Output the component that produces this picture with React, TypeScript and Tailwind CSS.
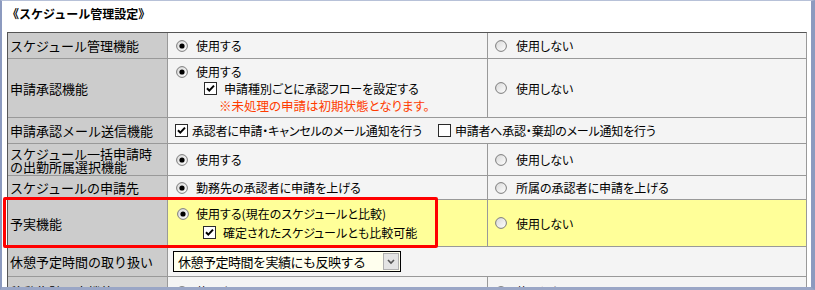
import React from "react";

const Radio = ({ checked }: { checked?: boolean }) => (
  <svg width="12" height="12" viewBox="0 0 12 12" className="shrink-0">
    <defs>
      <linearGradient id="rg" x1="0" y1="0" x2="1" y2="1">
        <stop offset="0" stopColor="#d8d8d8" />
        <stop offset="1" stopColor="#ffffff" />
      </linearGradient>
    </defs>
    <circle cx="6" cy="6" r="5.4" fill="url(#rg)" stroke="#7c7c7c" strokeWidth="1" />
    {checked && <circle cx="6" cy="6" r="2.6" fill="#000" />}
  </svg>
);

const Check = ({ checked }: { checked?: boolean }) => (
  <svg width="13" height="13" viewBox="0 0 13 13" className="shrink-0">
    <rect x="0.5" y="0.5" width="12" height="12" fill="#fff" stroke="#2a2a2a" />
    {checked && (
      <path d="M3 6.2 L5.3 8.6 L10 3.6" fill="none" stroke="#000" strokeWidth="2" />
    )}
  </svg>
);

const val = "text-[12px] leading-[17px] [font-feature-settings:'palt']";
const labelCls =
  "w-[160px] shrink-0 bg-[#cccccc] border-r border-[#999999] pl-[2px] flex items-center text-[13px] leading-[13px]";
const midCls = "w-[320px] shrink-0 border-r border-[#999999] flex items-center pl-[8px]";
const rightCls = "flex-1 flex items-center pl-[7px]";

export default function App() {
  return (
    <div className="relative w-[815px] h-[290px] overflow-hidden bg-white border-l-2 border-t border-r-4 border-b-[3px] border-l-[#8c9abf] border-t-[#b7c1d8] border-r-[#8c9abf] border-b-[#9aa6c6] font-['Noto_Sans_CJK_JP',sans-serif] text-black">
      <div className="h-[31px] pl-[5px] pt-[5px] text-[12px] leading-[16px] font-bold">
        《スケジュール管理設定》
      </div>
      <div className="ml-[5px] w-[800px] border-t border-l border-r border-t-[#555555] border-l-[#555555] border-r-[#999999] bg-[#f4f4f4]">
        {/* Row 1 */}
        <div className="flex h-[26px] border-b border-[#999999]">
          <div className={labelCls}>スケジュール管理機能</div>
          <div className={midCls}>
            <div className={`flex items-center gap-[8px] ${val}`}>
              <Radio checked />
              <span>使用する</span>
            </div>
          </div>
          <div className={rightCls}>
            <div className={`flex items-center gap-[9px] ${val}`}>
              <Radio />
              <span>使用しない</span>
            </div>
          </div>
        </div>
        {/* Row 2 */}
        <div className="flex h-[59px] border-b border-[#999999]">
          <div className={labelCls}>申請承認機能</div>
          <div className="w-[320px] shrink-0 border-r border-[#999999] pl-[8px] pt-[4px]">
            <div className={`flex items-center gap-[8px] ${val}`}>
              <Radio checked />
              <span>使用する</span>
            </div>
            <div className={`flex items-center gap-[7px] pl-[28px] ${val}`}>
              <Check checked />
              <span>申請種別ごとに承認フローを設定する</span>
            </div>
            <div className="pl-[43px] text-[12.5px] leading-[17px] text-[#ff3c00] [font-feature-settings:'palt']">
              ※未処理の申請は初期状態となります。
            </div>
          </div>
          <div className={rightCls}>
            <div className={`flex items-center gap-[9px] ${val}`}>
              <Radio />
              <span>使用しない</span>
            </div>
          </div>
        </div>
        {/* Row 3 */}
        <div className="flex h-[26px] border-b border-[#999999]">
          <div className={labelCls}>申請承認メール送信機能</div>
          <div className="flex-1 flex items-center pl-[7px]">
            <div className={`flex items-center gap-[4px] ${val} tracking-[-0.2px]`}>
              <Check checked />
              <span>承認者に申請・キャンセルのメール通知を行う</span>
            </div>
            <div className={`flex items-center gap-[4px] ml-[16px] ${val} tracking-[-0.2px]`}>
              <Check />
              <span>申請者へ承認・棄却のメール通知を行う</span>
            </div>
          </div>
        </div>
        {/* Row 4 */}
        <div className="flex h-[32px] border-b border-[#999999]">
          <div className={labelCls}>
            <div className="flex flex-col">
              <span className="leading-[13px]">スケジュール一括申請時</span>
              <span className="leading-[13px]">の出勤所属選択機能</span>
            </div>
          </div>
          <div className={midCls}>
            <div className={`flex items-center gap-[8px] ${val}`}>
              <Radio checked />
              <span>使用する</span>
            </div>
          </div>
          <div className={rightCls}>
            <div className={`flex items-center gap-[9px] ${val}`}>
              <Radio />
              <span>使用しない</span>
            </div>
          </div>
        </div>
        {/* Row 5 */}
        <div className="flex h-[24px] border-b border-[#999999]">
          <div className={labelCls}>スケジュールの申請先</div>
          <div className={midCls}>
            <div className={`flex items-center gap-[8px] ${val}`}>
              <Radio checked />
              <span>勤務先の承認者に申請を上げる</span>
            </div>
          </div>
          <div className={rightCls}>
            <div className={`flex items-center gap-[9px] ${val}`}>
              <Radio />
              <span>所属の承認者に申請を上げる</span>
            </div>
          </div>
        </div>
        {/* Row 6 */}
        <div className="flex h-[47px] border-b border-[#999999]">
          <div className={labelCls}>予実機能</div>
          <div className="w-[320px] shrink-0 border-r border-[#999999] bg-[#ffff99] pl-[9px] flex flex-col justify-center gap-[2px]">
            <div className={`flex items-center gap-[7px] ${val}`}>
              <Radio checked />
              <span>使用する(現在のスケジュールと比較)</span>
            </div>
            <div className={`flex items-center gap-[7px] pl-[26px] ${val}`}>
              <Check checked />
              <span>確定されたスケジュールとも比較可能</span>
            </div>
          </div>
          <div className="flex-1 flex items-center pl-[7px] bg-[#ffff99]">
            <div className={`flex items-center gap-[9px] ${val}`}>
              <Radio />
              <span>使用しない</span>
            </div>
          </div>
        </div>
        {/* Row 7 */}
        <div className="flex h-[30px] border-b border-[#999999]">
          <div className={labelCls}>休憩予定時間の取り扱い</div>
          <div className="flex-1 flex items-center pl-[5px]">
            <div className="flex items-center w-[228px] h-[21px] border border-black bg-[#ffffee]">
              <span className="flex-1 pl-[4px] text-[13px] leading-[19px] tracking-[-0.5px]">
                休憩予定時間を実績にも反映する
              </span>
              <div className="w-[16px] h-[17px] mr-[1px] bg-[#e4e4e4] border border-[#b0b0b0] flex items-center justify-center">
                <svg width="8" height="6" viewBox="0 0 8 6">
                  <path d="M1 1 L4 4 L7 1" fill="none" stroke="#555" strokeWidth="1.6" />
                </svg>
              </div>
            </div>
          </div>
        </div>
        {/* Row 8 */}
        <div className="flex h-[30px] border-b border-[#999999]">
          <div className={labelCls}>移動集計予定機能</div>
          <div className={midCls}>
            <div className={`flex items-center gap-[8px] ${val}`}>
              <Radio checked />
              <span>使用する</span>
            </div>
          </div>
          <div className={rightCls}>
            <div className={`flex items-center gap-[9px] ${val}`}>
              <Radio />
              <span>使用しない</span>
            </div>
          </div>
        </div>
      </div>
      <div className="absolute left-[1px] top-[196px] w-[435px] h-[51px] border-[3px] border-[#ff0000] rounded-[2px]" />
    </div>
  );
}
